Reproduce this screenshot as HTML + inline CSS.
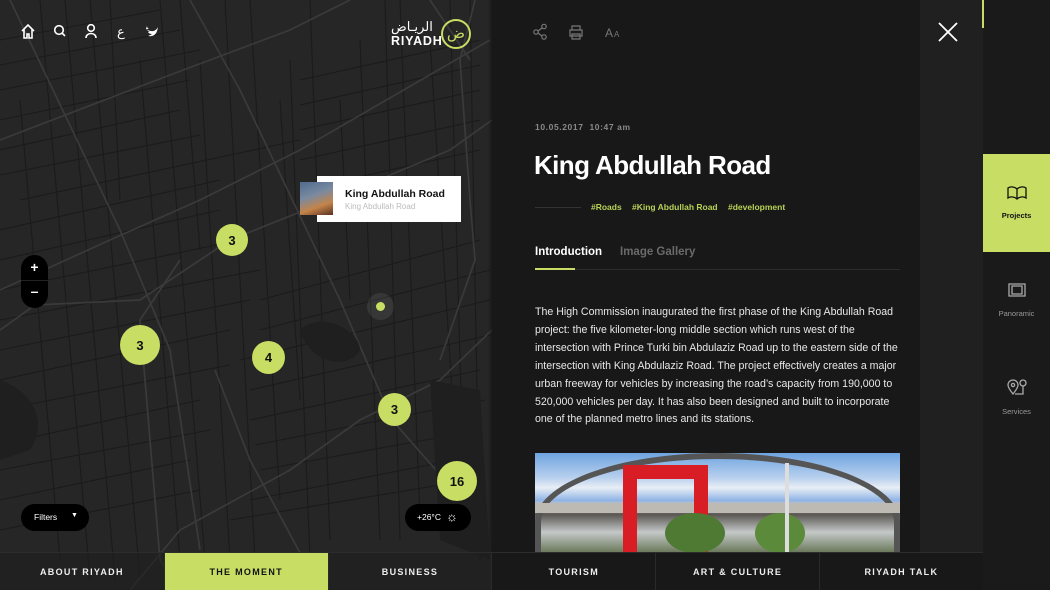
<!DOCTYPE html>
<html><head><meta charset="utf-8"><style>
*{margin:0;padding:0;box-sizing:border-box}
body{width:1050px;height:590px;overflow:hidden;background:#181818;font-family:"Liberation Sans",sans-serif;position:relative}
.abs{position:absolute}
.map{left:0;top:0;width:492px;height:590px;background:#262626;overflow:hidden}
.cl{position:absolute;border-radius:50%;background:#c8dd63;color:#111;font-weight:bold;display:flex;align-items:center;justify-content:center;font-size:13px}
.panel{left:492px;top:0;width:428px;height:590px;background:#181818}
.strip{left:920px;top:0;width:63px;height:590px;background:#202020}
.side{left:983px;top:0;width:67px;height:590px;background:#1a1a1a}
.nav{left:0;top:552px;width:983px;height:38px;display:flex}
.nav div{width:163.8px;height:38px;display:flex;align-items:center;justify-content:center;color:#eee;font-size:9px;font-weight:bold;letter-spacing:1.3px;border-left:1px solid #2a2a2a;border-top:1px solid #2c2c2c}
.body{left:535px;top:304px;width:370px;color:#e8e8e8;font-size:10.6px;line-height:17.9px}
.tag{color:#b8d256;font-weight:bold;font-size:8.5px}
.si{position:absolute;left:0;width:67px;text-align:center;font-size:7.5px}
</style></head><body>
<div class="abs map">
<svg width="492" height="590" style="position:absolute;left:0;top:0">
<g stroke="#1b1b1b" stroke-width="1.1" fill="none">
<path d="M0 40L160 10M0 90L200 50M0 150L180 110M20 200L300 140M0 260L220 210M0 320L260 270M0 380L230 330M20 440L200 400M0 500L190 460M260 300L480 240M240 360L490 300M250 420L480 370M260 470L480 430M230 520L470 480M300 80L480 40M300 130L480 90M0 65L180 30M0 120L190 80M0 175L200 135M0 230L220 180M0 290L240 240M0 350L250 300M0 410L230 365M0 470L210 430M0 530L200 490M260 330L490 270M250 390L490 335M255 445L485 400M250 500L480 455M300 105L480 65M300 160L480 120M300 190L480 150"/>
<path d="M40 0L90 580M90 0L140 580M140 60L180 560M200 60L230 560M250 0L280 500M310 0L330 540M360 40L380 540M400 0L420 520M430 40L460 520M470 0L480 560M20 100L60 560M110 0L120 200M180 0L200 250M280 100L300 400M340 100L350 300M65 0L115 580M160 0L205 560M225 0L255 560M290 60L310 560M385 0L400 540M450 0L465 540"/>
</g>
<g stroke="#3a3a3a" stroke-width="1.7" fill="none">
<path d="M10 0L120 230L170 350L200 550"/>
<path d="M0 330L35 305L140 300L230 240L330 200L450 150L492 120"/>
<path d="M0 290L110 240L200 200L300 150L490 40"/>
<path d="M190 0L240 90L340 300L392 420L480 520"/>
<path d="M0 140L170 75L290 30L350 0"/>
<path d="M130 590L180 530L290 470L360 420L440 380L492 330"/>
<path d="M215 370L250 460L320 590"/>
<path d="M475 0L460 60L470 200L475 260L440 360"/>
<path d="M180 260L140 320L160 560L180 590"/>
<path d="M430 0L470 60"/>
</g>
<g fill="#1f1f1f"><path d="M300 330C320 310 360 330 360 350C350 370 310 365 300 330Z"/><path d="M0 380C30 390 50 420 30 450L0 460Z"/><path d="M430 380L480 390L490 560L440 540Z"/></g>
</svg>
<div class="cl" style="left:216px;top:224px;width:32px;height:32px">3</div>
<div class="cl" style="left:120px;top:325px;width:40px;height:40px">3</div>
<div class="cl" style="left:252px;top:341px;width:33px;height:33px">4</div>
<div class="cl" style="left:378px;top:393px;width:33px;height:33px">3</div>
<div class="cl" style="left:437px;top:461px;width:40px;height:40px">16</div>
<div class="abs" style="left:367px;top:293px;width:27px;height:27px;border-radius:50%;background:rgba(255,255,255,.08)"></div>
<div class="abs" style="left:376px;top:302px;width:9px;height:9px;border-radius:50%;background:#c8dd63"></div>
<div class="cl" style="left:369px;top:208px;width:26px;height:14px;border-radius:0 0 13px 13px"></div>
<div class="abs" style="left:317px;top:176px;width:144px;height:46px;background:#fff"></div>
<div class="abs" style="left:300px;top:182px;width:33px;height:33px;background:linear-gradient(160deg,#4f6b8f 0%,#7a8aa0 40%,#c4844a 70%,#5a3020 100%)"></div>
<div class="abs" style="left:345px;top:188px;font-size:10.5px;font-weight:bold;color:#111">King Abdullah Road</div>
<div class="abs" style="left:345px;top:202px;font-size:8px;color:#bbb">King Abdullah Road</div>
<div class="abs" style="left:21px;top:255px;width:27px;height:53px;border-radius:14px;background:#000"></div>
<div class="abs" style="left:21px;top:280px;width:27px;height:1px;background:#222"></div>
<div class="abs" style="left:21px;top:259px;width:27px;text-align:center;color:#fff;font-size:14px;font-weight:bold">+</div>
<div class="abs" style="left:21px;top:283px;width:27px;text-align:center;color:#fff;font-size:14px;font-weight:bold">–</div>
<div class="abs" style="left:21px;top:504px;width:68px;height:27px;border-radius:14px;background:#000;color:#fff;font-size:8.5px;padding:8px 0 0 13px">Filters<span style="position:absolute;left:50px;top:8px;font-size:7px">▼</span></div>
<div class="abs" style="left:405px;top:504px;width:66px;height:27px;border-radius:14px;background:#000;color:#fff;font-size:8.5px;padding:8px 0 0 12px">+26°C<span style="position:absolute;left:41px;top:5px;font-size:13px">☼</span></div>
<svg class="abs" style="left:20px;top:23px" width="150" height="18" fill="none" stroke="#fff" stroke-width="1.6">
<path d="M2 8L8 2L14 8M4 6V15H7V11H9V15H12V6"/>
<circle cx="39" cy="7" r="4.3"/><path d="M42 10L45 13"/>
<circle cx="71" cy="5" r="3.3"/><path d="M66 15C66 9 76 9 76 15"/>
<text x="97" y="13" fill="#fff" stroke="none" font-size="13" font-family="Noto Sans CJK SC,sans-serif">ع</text>
<path d="M126 6C132 10 136 8 138 4C137 11 134 14 128 13C131 12 132 11 132 11C129 11 128 9 128 9C129 9 130 9 130 9C127 8 127 6 127 6C128 6 129 6 129 6C127 5 127 3 127 3" fill="#fff" stroke="none"/>
</svg>
<div class="abs" style="left:391px;top:16px;color:#fff;font-size:13px;font-family:'Noto Sans CJK SC',sans-serif">الريـاض</div>
<div class="abs" style="left:391px;top:34px;color:#fff;font-size:12.5px;font-weight:bold;letter-spacing:.8px">RIYADH</div>
<div class="abs" style="left:441px;top:19px;width:30px;height:30px;border-radius:50%;border:2px solid #c8dd63;color:#c8dd63;text-align:center;font-size:15px;line-height:24px;font-family:'Noto Sans CJK SC',sans-serif">ض</div>
</div>
<div class="abs" style="left:488px;top:0;width:6px;height:552px;background:linear-gradient(90deg,rgba(0,0,0,0),rgba(0,0,0,.5))"></div>
<div class="abs panel">
<svg class="abs" style="left:40px;top:22px" width="100" height="20" fill="none" stroke="#777" stroke-width="1.2">
<circle cx="4" cy="10" r="2.2"/><circle cx="12" cy="4.5" r="2.2"/><circle cx="12" cy="15" r="2.2"/><path d="M6 9L10 6M6 11L10 14"/>
<path d="M40 8V4H48V8M38 8H50V14H38ZM40 12H48V17H40Z"/>
<text x="73" y="15" fill="#777" stroke="none" font-size="12">A</text><text x="82" y="15" fill="#777" stroke="none" font-size="8">A</text>
</svg>
<div class="abs" style="left:43px;top:122px;color:#8a8a8a;font-size:8.5px;font-weight:bold;letter-spacing:.6px">10.05.2017&nbsp; 10:47 am</div>
<div class="abs" style="left:42px;top:150px;color:#fff;font-size:26px;font-weight:bold;letter-spacing:-.6px">King Abdullah Road</div>
<div class="abs" style="left:43px;top:207px;width:46px;height:1px;background:#333"></div>
<div class="abs tag" style="left:99px;top:202px">#Roads</div>
<div class="abs tag" style="left:140px;top:202px">#King Abdullah Road</div>
<div class="abs tag" style="left:236px;top:202px">#development</div>
<div class="abs" style="left:43px;top:246px;color:#fff;font-size:11.5px;font-weight:bold">Introduction</div>
<div class="abs" style="left:128px;top:246px;color:#6a6a6a;font-size:11.5px;font-weight:bold">Image Gallery</div>
<div class="abs" style="left:43px;top:269px;width:365px;height:1px;background:#2c2c2c"></div>
<div class="abs" style="left:43px;top:268px;width:40px;height:2px;background:#c8dd63"></div>
<div class="abs" style="left:43px;top:453px;width:365px;height:99px;overflow:hidden;background:linear-gradient(180deg,#6fa4e0 0%,#b8d0ee 25%,#e8eef4 35%,#8fb4e6 48%,#c9c6c0 52%,#5a5652 62%,#c4c8c8 80%,#6c7a5c 100%)">
<div class="abs" style="left:0;top:0;width:365px;height:99px;border-radius:50% 50% 0 0/70% 70% 0 0;border:6px solid #555;border-bottom:none"></div>
<div class="abs" style="left:0;top:50px;width:365px;height:10px;background:#bdbab4"></div>
<div class="abs" style="left:88px;top:12px;width:85px;height:90px;border:14px solid #d81d25;border-bottom:none"></div>
<div class="abs" style="left:130px;top:60px;width:60px;height:40px;border-radius:50%;background:#4e7a34"></div>
<div class="abs" style="left:220px;top:60px;width:50px;height:40px;border-radius:50%;background:#5a8a3a"></div>
<div class="abs" style="left:250px;top:10px;width:4px;height:90px;background:#ddd"></div>
</div>
</div>
<div class="abs body">The High Commission inaugurated the first phase of the King Abdullah Road<br>project: the five kilometer-long middle section which runs west of the<br>intersection with Prince Turki bin Abdulaziz Road up to the eastern side of the<br>intersection with King Abdulaziz Road. The project effectively creates a major<br>urban freeway for vehicles by increasing the road’s capacity from 190,000 to<br>520,000 vehicles per day. It has also been designed and built to incorporate<br>one of the planned metro lines and its stations.</div>
<div class="abs strip">
<svg class="abs" style="left:18px;top:22px" width="20" height="20" stroke="#fff" stroke-width="1.8"><path d="M1 1L19 19M19 1L1 19"/></svg>
</div>
<div class="abs side">
<div class="abs" style="left:-1px;top:0;width:2px;height:28px;background:#c8dd63"></div>
<div class="abs" style="left:0;top:154px;width:67px;height:98px;background:#c8dd63"></div>
<svg class="abs" style="left:24px;top:186px" width="20" height="14" fill="none" stroke="#111" stroke-width="1.3"><path d="M1 2C4 0 8 1 10 3C12 1 16 0 19 2V12C16 10 12 11 10 13C8 11 4 10 1 12ZM10 3V13"/></svg>
<div class="si" style="top:211px;color:#111;font-weight:bold">Projects</div>
<svg class="abs" style="left:24px;top:283px" width="20" height="14" fill="none" stroke="#aaa" stroke-width="1.3"><path d="M2 1H18V13H2ZM5 3V11H15V3Z"/></svg>
<div class="si" style="top:309px;color:#999">Panoramic</div>
<svg class="abs" style="left:23px;top:378px" width="22" height="18" fill="none" stroke="#aaa" stroke-width="1.3"><path d="M7 16C3 11 2 9 2 7A5 5 0 0 1 12 7C12 9 11 11 7 16Z"/><circle cx="7" cy="7" r="1.6"/><circle cx="17" cy="5" r="3"/><path d="M9 16H17V8"/></svg>
<div class="si" style="top:407px;color:#999">Services</div>
</div>
<div class="abs nav">
<div style="background:rgba(30,30,30,.6);border-left:none">ABOUT RIYADH</div>
<div style="background:#c8dd63;color:#111">THE MOMENT</div>
<div style="background:rgba(30,30,30,.6)">BUSINESS</div>
<div style="background:#181818">TOURISM</div>
<div style="background:#181818">ART &amp; CULTURE</div>
<div style="background:#181818">RIYADH TALK</div>
</div>
</body></html>
